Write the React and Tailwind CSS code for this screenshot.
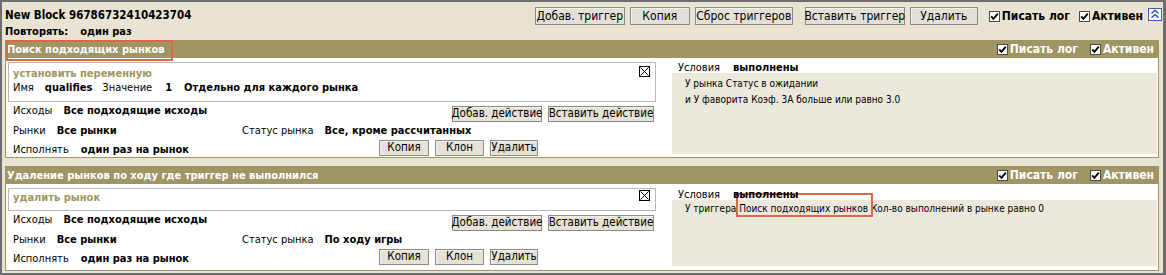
import React from "react";

function Check() {
  return (
    <span className="inline-flex h-[11px] w-[11px] items-center justify-center border border-[#4a4a4a] bg-white">
      <svg width="9" height="9" viewBox="0 0 9 9">
        <path d="M1.2 4.4 L3.4 6.8 L7.8 1.6" fill="none" stroke="#000" strokeWidth="1.8" />
      </svg>
    </span>
  );
}

function CloseIcon() {
  return (
    <svg width="11" height="11" viewBox="0 0 11 11" className="mt-[-1px] shrink-0">
      <rect x="0.5" y="0.5" width="10" height="10" fill="#fff" stroke="#000" strokeWidth="1" />
      <path d="M1.5 1.5 L9.5 9.5 M9.5 1.5 L1.5 9.5" stroke="#000" strokeWidth="1" />
    </svg>
  );
}

function CollapseIcon() {
  return (
    <span className="inline-flex h-[13px] w-[14px] items-center justify-center border border-[#3a5fb8] bg-white">
      <svg width="10" height="10" viewBox="0 0 10 10">
        <path d="M1.5 4.5 L5 1.2 L8.5 4.5 M1.5 8.8 L5 5.5 L8.5 8.8" fill="none" stroke="#2d55b5" strokeWidth="1.4" />
      </svg>
    </span>
  );
}

function TopBtn({ children, w }) {
  return (
    <span
      className={`inline-flex h-[18px] items-center justify-center whitespace-nowrap border border-[#8a8a8a] bg-[#e3e0d8] text-[12px] leading-none text-black shadow-[inset_1px_1px_0_#f4f2ec] ${w}`}
    >
      {children}
    </span>
  );
}

function SmallBtn({ children, w }) {
  return (
    <span
      className={`inline-flex h-[16px] items-center justify-center whitespace-nowrap border border-[#8a8a8a] bg-[#e6e2d6] text-[11.5px] leading-none text-black shadow-[inset_1px_1px_0_#f4f2ec] ${w}`}
    >
      {children}
    </span>
  );
}

function CheckLabel({ children, white }) {
  return (
    <span className="inline-flex items-center gap-[2px]">
      <Check />
      <span className={`text-[12px] font-bold leading-none ${white ? "text-white" : "text-black"}`}>{children}</span>
    </span>
  );
}

function Trigger({ title, action, actionBody, status, conditions, boxPt, boxPb, labelH, labelPt, condH, condPt, bodyH, annotateTitle }) {
  return (
    <div>
      <div className="relative flex h-[18px] items-center justify-between bg-[#a09565] pl-[2px] pr-[5px]">
        <span className="text-[11px] font-bold leading-none text-white">{title}</span>
        <div className="flex items-center gap-[12px]">
          <CheckLabel white>Писать лог</CheckLabel>
          <CheckLabel white>Активен</CheckLabel>
        </div>
        {annotateTitle && (
          <span className="pointer-events-none absolute left-[1px] top-0 h-[21px] w-[167px] border-2 border-[#db6849]" />
        )}
      </div>
      <div className={`flex border-x border-b border-[#a09565] bg-white ${bodyH}`}>
        <div className="w-[652px] pl-[2px] pt-[4px]">
          <div className={`w-[648px] border border-[#b8b8b8] bg-white pl-[4px] pr-[5px] ${boxPt} ${boxPb}`}>
            <div className="flex h-[14px] items-start justify-between leading-[14px]">
              <span className="font-bold text-[#a09565]">{action}</span>
              <CloseIcon />
            </div>
            {actionBody}
          </div>
          <div className="flex h-[20px] items-start pl-[5px] pr-[4px]">
            <span className="mt-[2px] leading-[14px]">
              Исходы<b className="ml-[11px]">Все подходящие исходы</b>
            </span>
            <div className="ml-auto mt-[4px] flex gap-[6px]">
              <SmallBtn w="w-[90px]">Добав. действие</SmallBtn>
              <SmallBtn w="w-[106px]">Вставить действие</SmallBtn>
            </div>
          </div>
          <div className="flex h-[18px] items-start pl-[5px]">
            <span className="mt-[2px] w-[229px] leading-[14px]">
              Рынки<b className="ml-[11px]">Все рынки</b>
            </span>
            <span className="mt-[2px] leading-[14px]">
              Статус рынка<b className="ml-[11px]">{status}</b>
            </span>
          </div>
          <div className="flex h-[17px] items-start pl-[5px]">
            <span className="mt-[3px] w-[366px] leading-[14px]">
              Исполнять<b className="ml-[12px]">один раз на рынок</b>
            </span>
            <div className="flex gap-[6px]">
              <SmallBtn w="w-[50px]">Копия</SmallBtn>
              <SmallBtn w="w-[49px]">Клон</SmallBtn>
              <SmallBtn w="w-[48px]">Удалить</SmallBtn>
            </div>
          </div>
        </div>
        <div className="ml-[14px] flex w-[485px] flex-col">
          <div className={`relative z-10 pl-[6px] leading-[14px] ${labelH} ${labelPt}`}>
            Условия<b className="ml-[13px]">выполнены</b>
          </div>
          <div className={`bg-[#ece8dc] pl-[13px] text-[10px] leading-[16px] ${condH} ${condPt}`}>{conditions}</div>
        </div>
      </div>
    </div>
  );
}

export default function App() {
  return (
    <div className="h-[275px] w-[1166px] overflow-hidden bg-white">
      <div className="h-[275px] w-[1166px] border-l-2 border-r-[3px] border-t-2 border-b-2 border-[#6e6e6e] bg-[#e8e3d2] pl-[3px] pr-[4px] font-['DejaVu_Sans_Condensed','DejaVu_Sans',sans-serif] text-[11px] text-black">
        <div className="flex h-[23px] items-start pt-[5px]">
          <span className="mt-[1px] text-[11.5px] font-bold leading-[14px]">New Block 96786732410423704</span>
          <div className="ml-auto flex items-center">
            <div className="flex gap-[5px]">
              <TopBtn w="w-[90px]">Добав. триггер</TopBtn>
              <TopBtn w="w-[60px]">Копия</TopBtn>
              <TopBtn w="w-[98px]">Сброс триггеров</TopBtn>
            </div>
            <div className="ml-[12px] flex gap-[5px]">
              <TopBtn w="w-[100px]">Вставить триггер</TopBtn>
              <TopBtn w="w-[68px]">Удалить</TopBtn>
            </div>
            <div className="ml-[11px] flex items-center gap-[9px]">
              <CheckLabel>Писать лог</CheckLabel>
              <CheckLabel>Активен</CheckLabel>
            </div>
            <div className="ml-[5px] mr-[-3px]">
              <CollapseIcon />
            </div>
          </div>
        </div>
        <div className="h-[15px] text-[11px] font-bold leading-[14px]">
          Повторять:<span className="ml-[12px]">один раз</span>
        </div>
        <Trigger
          title="Поиск подходящих рынков"
          action="установить переменную"
          annotateTitle
          boxPt="pt-[4px]"
          boxPb="pb-[6px]"
          actionBody={
            <div className="h-[14px] leading-[14px]">
              Имя<b className="ml-[11px]">qualifies</b>
              <span className="ml-[10px]">Значение</span>
              <b className="ml-[13px]">1</b>
              <b className="ml-[12px]">Отдельно для каждого рынка</b>
            </div>
          }
          status="Все, кроме рассчитанных"
          labelH="h-[15px]"
          labelPt="pt-[3px]"
          condH="h-[81px]"
          condPt="pt-[3px]"
          bodyH="h-[100px]"
          conditions={
            <>
              <div>У рынка Статус в ожидании</div>
              <div>и У фаворита Коэф. 3А больше или равно 3.0</div>
            </>
          }
        />
        <div className="h-[8px]" />
        <Trigger
          title="Удаление рынков по ходу где триггер не выполнился"
          action="удалить рынок"
          boxPt="pt-[2px]"
          boxPb="pb-[5px]"
          actionBody={null}
          status="По ходу игры"
          labelH="h-[16px]"
          labelPt="pt-[4px]"
          condH="h-[66px]"
          condPt="pt-[1px]"
          bodyH="h-[87px]"
          conditions={
            <div>
              У триггера{" "}
              <span className="relative">
                Поиск подходящих рынков
                <span className="pointer-events-none absolute bottom-[-3px] left-[-3px] right-[-5px] top-[-10px] border-2 border-[#db6849]" />
              </span>{" "}
              Кол-во выполнений в рынке равно 0
            </div>
          }
        />
      </div>
    </div>
  );
}
